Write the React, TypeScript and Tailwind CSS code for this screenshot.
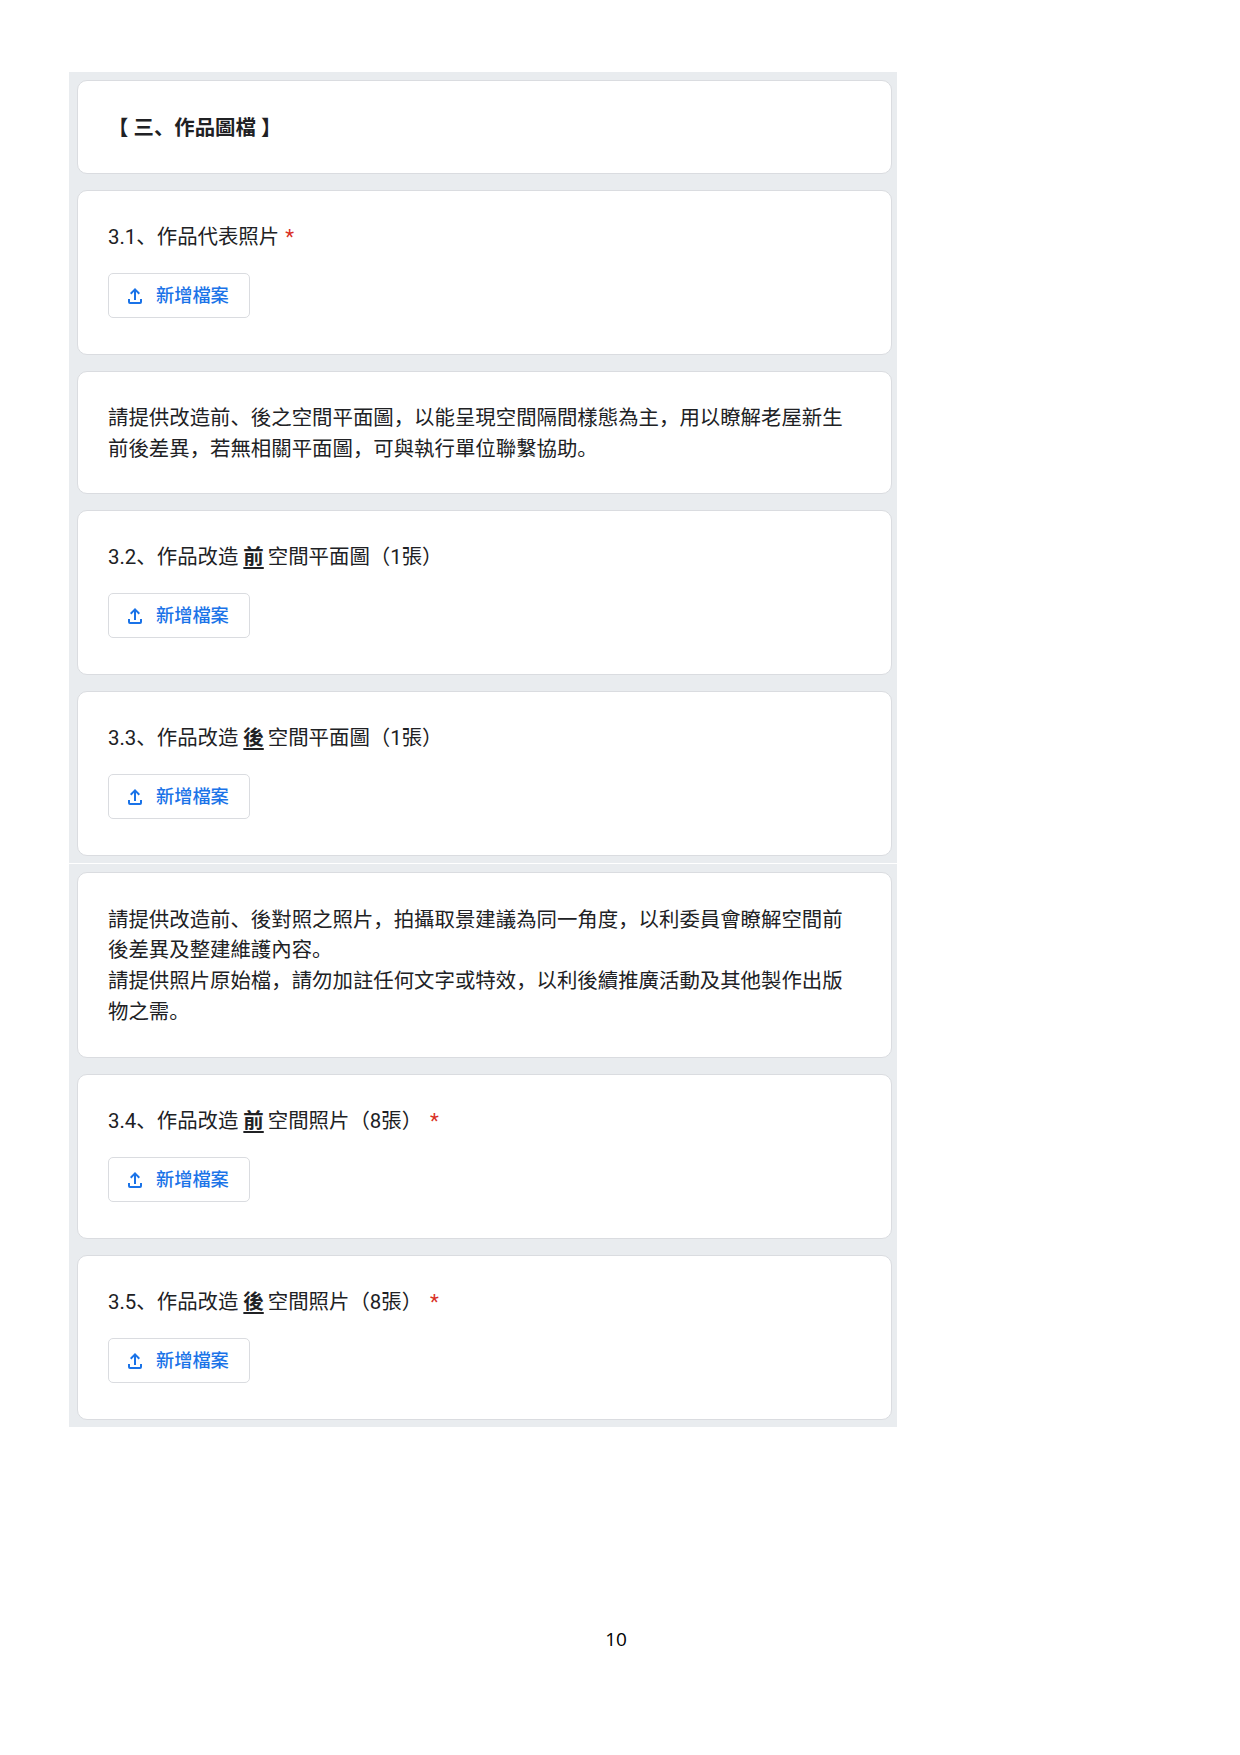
import React from 'react';

const Req = ({ gap = false }: { gap?: boolean }) => (
  <span className={`text-[#d93025] ${gap ? 'ml-[8px]' : 'ml-[1px]'}`}>*</span>
);

const Card = ({ className, children }: { className: string; children: React.ReactNode }) => (
  <div className={`rounded-[10px] border border-[#dadce0] bg-white pl-[30px] pr-[44px] ${className}`}>{children}</div>
);

const UploadCard = ({ children }: { children: React.ReactNode }) => (
  <Card className="h-[165px] pt-[31px]">
    <div className="h-[30px] text-[20.42px] leading-[30px] text-[#202124]">{children}</div>
    <div className="mt-[21px] flex h-[45px] w-[142px] items-center rounded-[5px] border border-[#dadce0] pl-[14px]">
      <svg className="h-[24px] w-[24px] -translate-y-[1px] text-[#1a73e8]" viewBox="0 0 24 24" fill="currentColor">
        <path d="M5 16h2v3h10v-3h2v3a2 2 0 0 1-2 2H7a2 2 0 0 1-2-2z" />
        <path d="M11 17V8.8L8.4 11.4 7 10l5-5 5 5-1.4 1.4L13 8.8V17z" />
      </svg>
      <span className="ml-[9px] text-[18.2px] font-medium text-[#1a73e8]">新增檔案</span>
    </div>
  </Card>
);

const Mark = ({ children }: { children: React.ReactNode }) => (
  <b className="ml-[5px] mr-[4px] font-bold underline underline-offset-[3px]">{children}</b>
);

export default function App() {
  return (
    <div className="relative h-[1755px] w-[1240px] bg-white pt-[72px] pl-[69px] font-['Roboto','Noto_Sans_CJK_SC',sans-serif] text-[#202124]">
      <div className="w-[828px] bg-[#e9ecef] pt-[8px] pb-[7px] pl-[8px] pr-[5px]">
        <div className="flex flex-col gap-[16px]">
          <Card className="flex h-[94px] items-center pt-[2px]">
            <h2 className="text-[20.42px] font-bold">【 三、作品圖檔 】</h2>
          </Card>
          <UploadCard>
            3.1、作品代表照片 <Req />
          </UploadCard>
          <Card className="flex h-[123px] items-center pt-[3px]">
            <p className="text-[20.42px] leading-[30.6px]">
              請提供改造前、後之空間平面圖，以能呈現空間隔間樣態為主，用以瞭解老屋新生前後差異，若無相關平面圖，可與執行單位聯繫協助。
            </p>
          </Card>
          <UploadCard>
            3.2、作品改造<Mark>前</Mark>空間平面圖（1張）
          </UploadCard>
          <UploadCard>
            3.3、作品改造<Mark>後</Mark>空間平面圖（1張）
          </UploadCard>
        </div>
      </div>
      <div className="mt-[1px] w-[828px] bg-[#e9ecef] pt-[8px] pb-[7px] pl-[8px] pr-[5px]">
        <div className="flex flex-col gap-[16px]">
          <Card className="flex h-[186px] items-center pt-[2px]">
            <p className="text-[20.42px] leading-[30.6px]">
              請提供改造前、後對照之照片，拍攝取景建議為同一角度，以利委員會瞭解空間前後差異及整建維護內容。
              <br />
              請提供照片原始檔，請勿加註任何文字或特效，以利後續推廣活動及其他製作出版物之需。
            </p>
          </Card>
          <UploadCard>
            3.4、作品改造<Mark>前</Mark>空間照片（8張）<Req gap />
          </UploadCard>
          <UploadCard>
            3.5、作品改造<Mark>後</Mark>空間照片（8張）<Req gap />
          </UploadCard>
        </div>
      </div>
      <div className="mt-[200px] w-[1094px] text-center font-['Open_Sans',sans-serif] text-[19px] leading-[24px] text-black">10</div>
    </div>
  );
}
